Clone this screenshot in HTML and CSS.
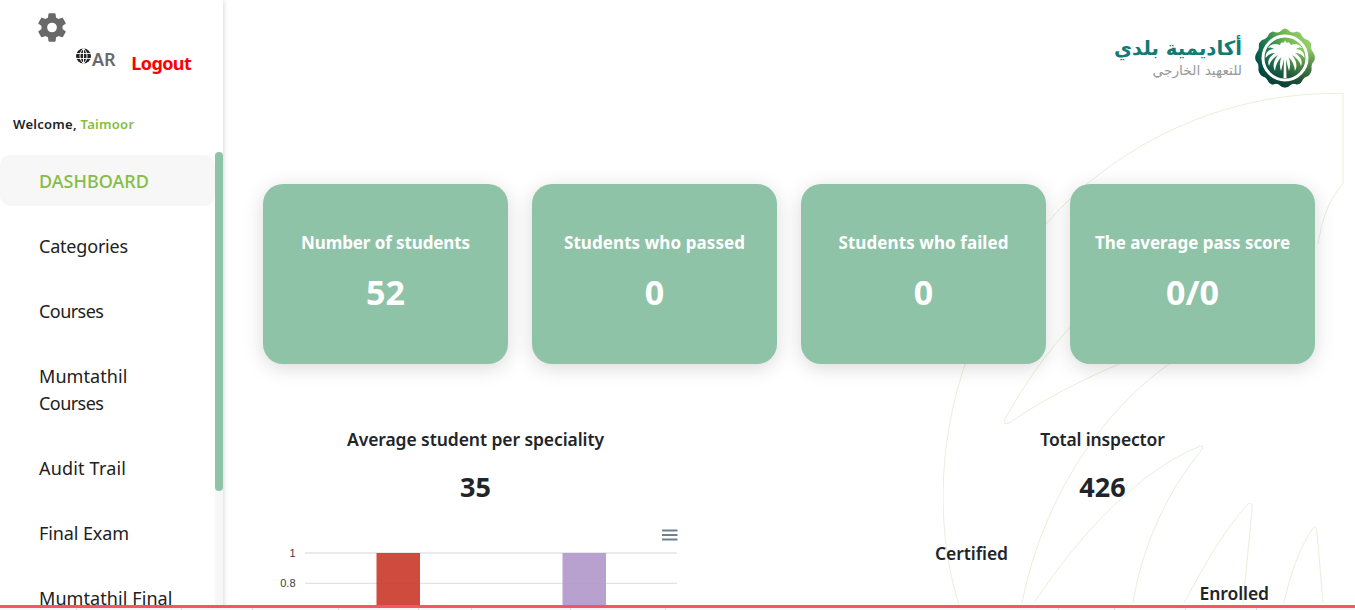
FILE: index.html
```html
<!DOCTYPE html>
<html lang="en">
<head>
<meta charset="utf-8">
<title>Dashboard</title>
<link rel="stylesheet" href="styles.css">
</head>
<body>
<div class="app">
  <aside class="sidebar">
    <div class="tools">
      <svg class="gear" viewBox="2.500 2.400 19 19.200"><path d="M19.14 12.94c.04-.3.06-.61.06-.94s-.02-.64-.07-.94l2.03-1.58a.5.5 0 0 0 .12-.61l-1.92-3.32a.5.5 0 0 0-.59-.22l-2.39.96a7 7 0 0 0-1.62-.94l-.36-2.54a.5.5 0 0 0-.48-.41h-3.84a.5.5 0 0 0-.47.41l-.36 2.54c-.59.24-1.13.57-1.62.94l-2.39-.96a.5.5 0 0 0-.59.22L2.74 8.87a.5.5 0 0 0 .12.61l2.03 1.58a6 6 0 0 0 0 1.88l-2.03 1.58a.5.5 0 0 0-.12.61l1.92 3.32c.12.22.37.29.59.22l2.39-.96c.5.38 1.03.7 1.62.94l.36 2.54c.05.24.24.41.48.41h3.84c.24 0 .44-.17.47-.41l.36-2.54a7 7 0 0 0 1.62-.94l2.39.96c.22.08.47 0 .59-.22l1.92-3.32a.5.5 0 0 0-.12-.61zM12 15.3a3.3 3.3 0 1 1 0-6.6 3.3 3.3 0 0 1 0 6.600z"/></svg>
      <a class="lang"><svg class="globe" viewBox="0 0 16 16"><circle cx="8" cy="8" r="8"/><path d="M0 5.300h16M0 10.700h16M8 0v16M8 0C3 4 3 12 8 16M8 0c5 4 5 12 0 16"/></svg><span class="lang-code">AR</span></a>
      <a class="logout">Logout</a>
    </div>
    <p class="welcome">Welcome, <span class="user">Taimoor</span></p>
    <div class="scroller">
      <nav class="menu">
        <a class="item active">DASHBOARD</a>
        <a class="item categories">Categories</a>
        <a class="item courses">Courses</a>
        <a class="item mumtathil">Mumtathil <span class="courses">Courses</span></a>
        <a class="item audit">Audit Trail</a>
        <a class="item">Final Exam</a>
        <a class="item mumtathil">Mumtathil Final</a>
      </nav>
      <div class="track"><div class="thumb"></div></div>
    </div>
  </aside>
  <main class="main">
    <svg class="palm" viewBox="0 0 415 525">
      <path d="M400 98V7.500C235 4 82 108 25 270C-8 360-6 455 18 525"/>
      <path d="M400 98C385 114 379 134 375 158"/>
      <path d="M210 170C160 200 102 260 62 333Q59 340 66 337C110 307 165 280 228 258"/>
      <path d="M79 517C100 410 165 308 258 258"/>
      <path d="M91 517C142 440 200 384 255 361Q262 358 258 365C225 404 199 460 190 517"/>
      <path d="M241 517C265 473 280 446 305 418Q310 415 309 424L300 517"/>
      <path d="M341 517C347 490 355 464 370 442Q373 438 374 446L380 517"/>
    </svg>
    <header class="brand">
      <div class="brand-text" dir="rtl" lang="ar"><span class="brand-name">أكاديمية بلدي</span><span class="brand-sub">للتعهيد الخارجي</span></div>
      <svg class="seal" viewBox="0 0 60 60">
        <defs><linearGradient id="sealFill" gradientUnits="userSpaceOnUse" x1="4" y1="42" x2="54" y2="20"><stop offset="0" stop-color="#00504a"/><stop offset=".35" stop-color="#267f50"/><stop offset=".68" stop-color="#72b84e"/><stop offset="1" stop-color="#91cd68"/></linearGradient>
        <linearGradient id="sealShade" x1="0" y1="0" x2=".2" y2="1"><stop offset=".5" stop-color="#092f2d" stop-opacity="0"/><stop offset="1" stop-color="#092f2d" stop-opacity=".75"/></linearGradient>
        <path id="sealShape" d="M30 .5Q33 1 35.500 4Q38 5 42 3.500Q46 4.500 47.300 8.500Q49 11 53 12Q57 15 56 19Q56 22 58.500 25Q61 29 59 33Q56 36 56.500 40Q57 45 53 48Q49 49 47.500 52Q46 56 42 56.500Q38 55 35.500 57Q33 59.500 30 59.500Q27 59.500 24.500 57Q22 55 18 56.500Q14 56 12.500 52Q11 49 7 48Q3 45 3.500 40Q4 36 1 33Q-1 29 1.500 25Q4 22 4 19Q3 15 7 12Q11 11 12.700 8.500Q14 4.500 18 3.500Q22 5 24.500 4Q27 1 30 .5Z"/></defs>
        <use href="#sealShape" fill="url(#sealFill)"/><use href="#sealShape" fill="url(#sealShade)"/>
        <circle class="ring" cx="30" cy="30" r="22"/>
        <path class="frond" d="M28.500 50L29 31Q28 36 26 43Q23.500 35 26.500 29Q21 34 20 43Q16 36 23 27Q16 31 14 38Q11 31 20 25Q14 25 10.500 30Q10 22 19 21Q16 18.500 13 20Q17 14 25 17Q26 13 28.500 15L30 12.500L32 15Q34 13 36 17Q43 14 47 20Q44 18.500 41 21Q50 22 49.500 30Q46 25 40 25Q49 31 46 38Q44 31 37 27Q44 36 40 43Q39 34 33.500 29Q36.500 35 34 43Q32 36 31 31L31.500 50Z"/>
      </svg>
    </header>
    <section class="cards">
      <div class="card"><h3 class="card-title students">Number of students</h3><p class="card-value">52</p></div>
      <div class="card"><h3 class="card-title passed">Students who passed</h3><p class="card-value">0</p></div>
      <div class="card"><h3 class="card-title passed">Students who failed</h3><p class="card-value">0</p></div>
      <div class="card"><h3 class="card-title">The average pass score</h3><p class="card-value">0/0</p></div>
    </section>
    <section class="charts">
      <div class="panel">
        <h3 class="panel-title">Average student per speciality</h3>
        <p class="panel-value">35</p>
        <svg class="bars" viewBox="0 0 425 86">
          <path class="burger" d="M399 10.500h15.500M399 15h15.500M399 19.500h15.500"/>
          <path class="grid" d="M42 33h372M42 63.300h372"/>
          <text class="tick" x="32.500" y="37">1</text><text class="tick" x="32.500" y="67">0.8</text>
          <rect x="113.500" y="33" width="43.500" height="60" fill="#c93728" fill-opacity=".9"/>
          <rect x="299.500" y="33" width="43.500" height="60" fill="#b097ca" fill-opacity=".9"/>
        </svg>
      </div>
      <div class="panel">
        <h3 class="panel-title total">Total inspector</h3>
        <p class="panel-value count">426</p>
        <div class="legend"><span class="certified">Certified</span><span class="enrolled">Enrolled</span></div>
      </div>
    </section>
  </main>
  <footer class="strip">
    <i class="mark" style="left:76px"></i><i class="mark" style="left:181px"></i><i class="mark" style="left:252px"></i><i class="mark" style="left:338px"></i><i class="mark" style="left:418px"></i><i class="mark" style="left:471px"></i><i class="mark" style="left:570px"></i><i class="mark" style="left:665px"></i><i class="mark" style="left:1058px"></i><i class="mark" style="left:1114px"></i><i class="mark" style="left:1185px"></i><i class="mark" style="left:1256px"></i>
  </footer>
</div>
</body>
</html>
```
FILE: styles.css
```css
* { box-sizing: border-box; }
body { margin: 0; overflow: hidden; background: #fff; color: #212529; font-family: "Noto Sans", "Open Sans", sans-serif; }
h3, p { margin: 0; }
.app { position: relative; display: flex; width: 1355px; height: 610px; overflow: hidden; }

.sidebar { display: flex; flex-direction: column; flex: none; width: 223px; height: 610px; box-shadow: 0 0 6px rgba(0,0,0,.2); }
.tools { display: flex; align-items: flex-start; height: 110px; padding: 13px 0 0 38px; }
.gear { width: 28px; height: 29px; fill: #696969; }
.lang { display: flex; margin: 35px 0 0 10px; }
.globe { width: 15px; height: 16px; fill: #222; stroke: #fff; stroke-width: 1; overflow: hidden; }
.globe circle { stroke: none; }
.globe path { fill: none; }
.lang-code { margin: -1px 0 0 1px; font-size: 18px; line-height: 24px; font-weight: 600; color: #696969; letter-spacing: -.2px; }
.logout { margin: 37px 0 0 16px; font-size: 18px; line-height: 27px; font-weight: 700; color: #f00; letter-spacing: -.6px; }
.welcome { height: 42px; padding-left: 13px; font-size: 13px; line-height: 28px; font-weight: 600; white-space: nowrap; letter-spacing: .28px; }
.user { color: #84bd43; }
.scroller { display: flex; flex: 1; min-height: 0; }
.menu { display: flex; flex-direction: column; flex: 1; gap: 14px; padding-top: 3px; }
.item { flex: none; padding: 13px 60px 11px 39px; font-size: 18px; line-height: 27px; border-radius: 10px; color: #212121; letter-spacing: -.1px; }
.item:last-child { padding-right: 30px; }
.active { height: 51px; background: #f7f7f7; color: #84bd43; font-weight: 500; letter-spacing: 0; }
.categories { letter-spacing: -.2px; }
.courses { letter-spacing: -.55px; }
.mumtathil { letter-spacing: .08px; }
.mumtathil .courses { letter-spacing: -.55px; }
.audit { letter-spacing: .18px; }
.track { width: 8px; background: #f7f7f7; }
.thumb { height: 339px; border-radius: 4px; background: #8fc3a8; }

.main { position: relative; flex: 1; padding: 28px 40px 0; }
.palm { position: absolute; left: 719.500px; top: 86px; width: 415px; height: 525px; fill: none; stroke: #e7f0da; stroke-width: 1; }
.brand { position: relative; display: flex; justify-content: flex-end; gap: 13px; height: 156px; }
.brand-text { display: flex; flex-direction: column; padding-top: 7px; font-family: "DejaVu Sans", sans-serif; white-space: nowrap; }
.brand-name { font-size: 19.700px; line-height: 27px; font-weight: 700; color: #117b73; }
.brand-sub { font-size: 13.800px; line-height: 17px; color: #999; }
.seal { width: 60px; height: 60px; }
.ring { fill: none; stroke: #fff; stroke-width: 3; }
.frond { fill: #fff; }
.cards { position: relative; display: grid; grid-template-columns: repeat(4, 245px); gap: 24px; }
.card { height: 180px; padding-top: 45px; border-radius: 20px; background: #8fc3a8; box-shadow: 0 4px 20px rgba(0,0,0,.15); color: #fff; text-align: center; white-space: nowrap; }
.card-title { font-size: 17px; line-height: 27px; font-weight: 700; letter-spacing: -.04px; }
.students { letter-spacing: -.1px; }
.passed { letter-spacing: .08px; }
.card-value { margin-top: 11px; font-size: 34px; line-height: 50px; font-weight: 700; }
.charts { position: relative; display: flex; justify-content: space-between; margin-top: 63px; }
.panel { width: 425px; text-align: center; }
.panel-title { font-size: 17.500px; line-height: 27px; font-weight: 600; letter-spacing: -.08px; }
.total { letter-spacing: -.15px; }
.panel-value { margin-top: 14px; font-size: 27px; line-height: 40px; font-weight: 700; }
.bars { display: block; width: 425px; height: 86px; margin-top: 13px; }
.burger { stroke: #6e8192; stroke-width: 1.800; }
.grid { stroke: #e3e3e3; stroke-width: 1.300; }
.tick { font: 11px "Liberation Sans", sans-serif; text-anchor: end; fill: #373d3f; }
.legend { display: flex; justify-content: space-between; padding: 33px 46px 0 45px; font-size: 17.500px; line-height: 27px; font-weight: 600; letter-spacing: -.08px; }
.enrolled { padding-top: 40px; }
.charts { margin-top: 62px; }

.strip { position: absolute; left: 0; top: 605px; width: 1355px; height: 5px; border-top: 3px solid #f65561; background: #f8f8f8; }
.mark { position: absolute; top: 0; width: 1px; height: 2px; background: #d8d8d8; }
```
